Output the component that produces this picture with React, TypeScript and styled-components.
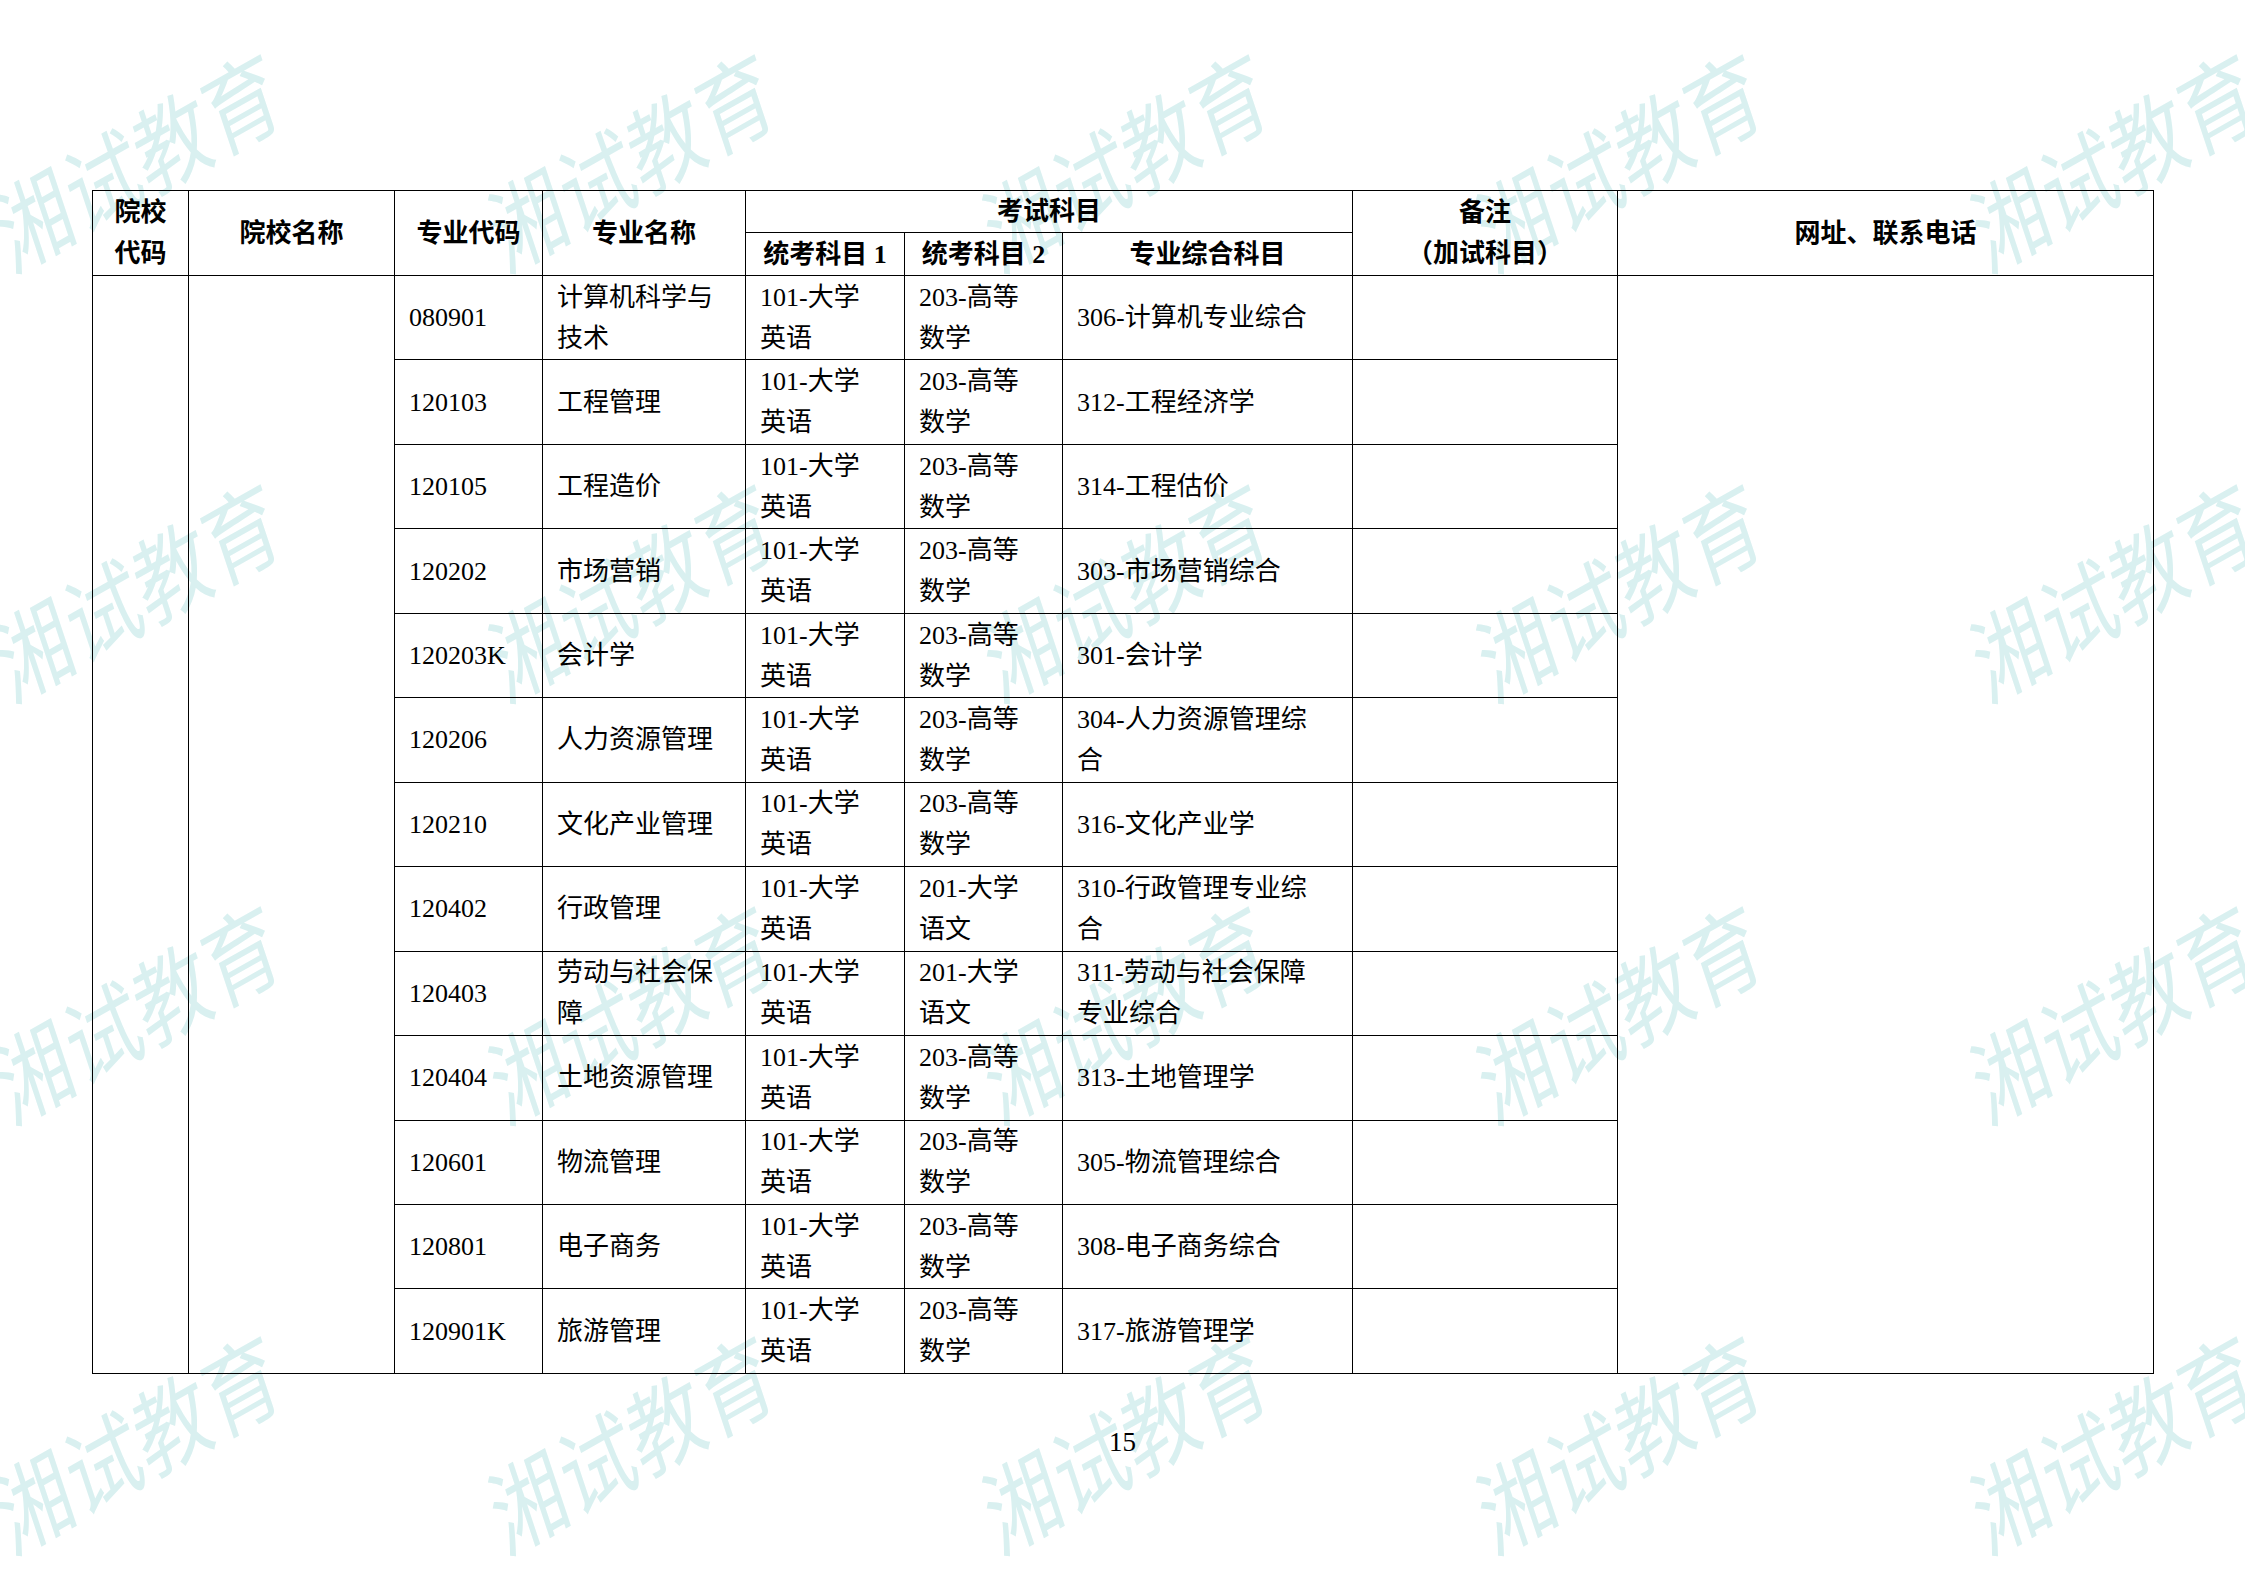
import React from 'react';
import styled, { createGlobalStyle } from 'styled-components';

const GlobalStyle = createGlobalStyle`
  html, body {
    margin: 0;
    padding: 0;
    background: #fff;
  }
  body {
    font-family: "Liberation Serif", "Noto Sans CJK SC", serif;
  }
`;

const Page = styled.div`
  position: relative;
  box-sizing: border-box;
  width: 2245px;
  height: 1587px;
  overflow: hidden;
  background: #fff;
  padding: 190px 0 0 92px;
`;

const Watermarks = styled.div`
  position: absolute;
  inset: 0;
  z-index: 0;
  pointer-events: none;
`;

const Mark = styled.span`
  position: absolute;
  font-family: "Noto Sans CJK SC", sans-serif;
  font-size: 75px;
  line-height: 1;
  color: #d9f0f0;
  white-space: nowrap;
  transform: translate(-50%, -50%) scale(1, 1.3) rotate(-23.4deg);
`;

const Sheet = styled.table`
  position: relative;
  z-index: 1;
  width: 2061px;
  table-layout: fixed;
  border-collapse: collapse;
  font-family: "Liberation Serif", "Noto Sans CJK SC", serif;
  font-size: 26px;
  line-height: 41px;
  color: #000;
`;

const Col = styled.col<{ $w: number }>`
  width: ${p => p.$w}px;
`;

const HeadRow = styled.tr<{ $h: number }>`
  height: ${p => p.$h}px;
`;

const BodyRow = styled.tr`
  height: 84.46px;
`;

const HeadCell = styled.th`
  border: 1px solid #000;
  padding: 0 4px;
  font-weight: 700;
  text-align: center;
  vertical-align: middle;
  white-space: nowrap;
`;

const Cell = styled.td`
  border: 1px solid #000;
  padding: 0 6px 0 14px;
  font-weight: 400;
  text-align: left;
  vertical-align: middle;
  white-space: nowrap;
`;

const PageNumber = styled.div`
  position: relative;
  z-index: 1;
  width: 2061px;
  margin-top: 53px;
  font-family: "Liberation Serif", serif;
  font-size: 27px;
  line-height: 30px;
  text-align: center;
`;

type Major = {
  code: string;
  name: string[];
  exam1: string[];
  exam2: string[];
  special: string[];
};

const english = ['101-大学', '英语'];
const maths = ['203-高等', '数学'];
const chinese = ['201-大学', '语文'];

const majors: Major[] = [
  { code: '080901', name: ['计算机科学与', '技术'], exam1: english, exam2: maths, special: ['306-计算机专业综合'] },
  { code: '120103', name: ['工程管理'], exam1: english, exam2: maths, special: ['312-工程经济学'] },
  { code: '120105', name: ['工程造价'], exam1: english, exam2: maths, special: ['314-工程估价'] },
  { code: '120202', name: ['市场营销'], exam1: english, exam2: maths, special: ['303-市场营销综合'] },
  { code: '120203K', name: ['会计学'], exam1: english, exam2: maths, special: ['301-会计学'] },
  { code: '120206', name: ['人力资源管理'], exam1: english, exam2: maths, special: ['304-人力资源管理综', '合'] },
  { code: '120210', name: ['文化产业管理'], exam1: english, exam2: maths, special: ['316-文化产业学'] },
  { code: '120402', name: ['行政管理'], exam1: english, exam2: chinese, special: ['310-行政管理专业综', '合'] },
  { code: '120403', name: ['劳动与社会保', '障'], exam1: english, exam2: chinese, special: ['311-劳动与社会保障', '专业综合'] },
  { code: '120404', name: ['土地资源管理'], exam1: english, exam2: maths, special: ['313-土地管理学'] },
  { code: '120601', name: ['物流管理'], exam1: english, exam2: maths, special: ['305-物流管理综合'] },
  { code: '120801', name: ['电子商务'], exam1: english, exam2: maths, special: ['308-电子商务综合'] },
  { code: '120901K', name: ['旅游管理'], exam1: english, exam2: maths, special: ['317-旅游管理学'] },
];

const markCols = [136, 630, 1124, 1618, 2112];
const markRows = [157, 587, 1009, 1439];

const Lines = ({ lines }: { lines: string[] }) => (
  <>
    {lines.map((l, i) => (
      <React.Fragment key={i}>
        {i > 0 && <br />}
        {l}
      </React.Fragment>
    ))}
  </>
);

const App = () => {
  return (
    <Page>
      <GlobalStyle />
      <Watermarks>
        {markRows.map(y =>
          markCols.map(x => (
            <Mark key={`${x}-${y}`} style={{ left: x, top: y }}>湘试教育</Mark>
          ))
        )}
      </Watermarks>
      <Sheet>
        <colgroup>
          <Col $w={96} />
          <Col $w={206} />
          <Col $w={148} />
          <Col $w={203} />
          <Col $w={159} />
          <Col $w={158} />
          <Col $w={290} />
          <Col $w={265} />
          <Col $w={536} />
        </colgroup>
        <thead>
          <HeadRow $h={42}>
            <HeadCell rowSpan={2}>院校<br />代码</HeadCell>
            <HeadCell rowSpan={2}>院校名称</HeadCell>
            <HeadCell rowSpan={2}>专业代码</HeadCell>
            <HeadCell rowSpan={2}>专业名称</HeadCell>
            <HeadCell colSpan={3}>考试科目</HeadCell>
            <HeadCell rowSpan={2}>备注<br />（加试科目）</HeadCell>
            <HeadCell rowSpan={2}>网址、联系电话</HeadCell>
          </HeadRow>
          <HeadRow $h={43}>
            <HeadCell>统考科目 1</HeadCell>
            <HeadCell>统考科目 2</HeadCell>
            <HeadCell>专业综合科目</HeadCell>
          </HeadRow>
        </thead>
        <tbody>
          {majors.map((m, i) => (
            <BodyRow key={m.code}>
              {i === 0 && <Cell rowSpan={majors.length} />}
              {i === 0 && <Cell rowSpan={majors.length} />}
              <Cell>{m.code}</Cell>
              <Cell><Lines lines={m.name} /></Cell>
              <Cell><Lines lines={m.exam1} /></Cell>
              <Cell><Lines lines={m.exam2} /></Cell>
              <Cell><Lines lines={m.special} /></Cell>
              <Cell />
              {i === 0 && <Cell rowSpan={majors.length} />}
            </BodyRow>
          ))}
        </tbody>
      </Sheet>
      <PageNumber>15</PageNumber>
    </Page>
  );
};

export default App;
